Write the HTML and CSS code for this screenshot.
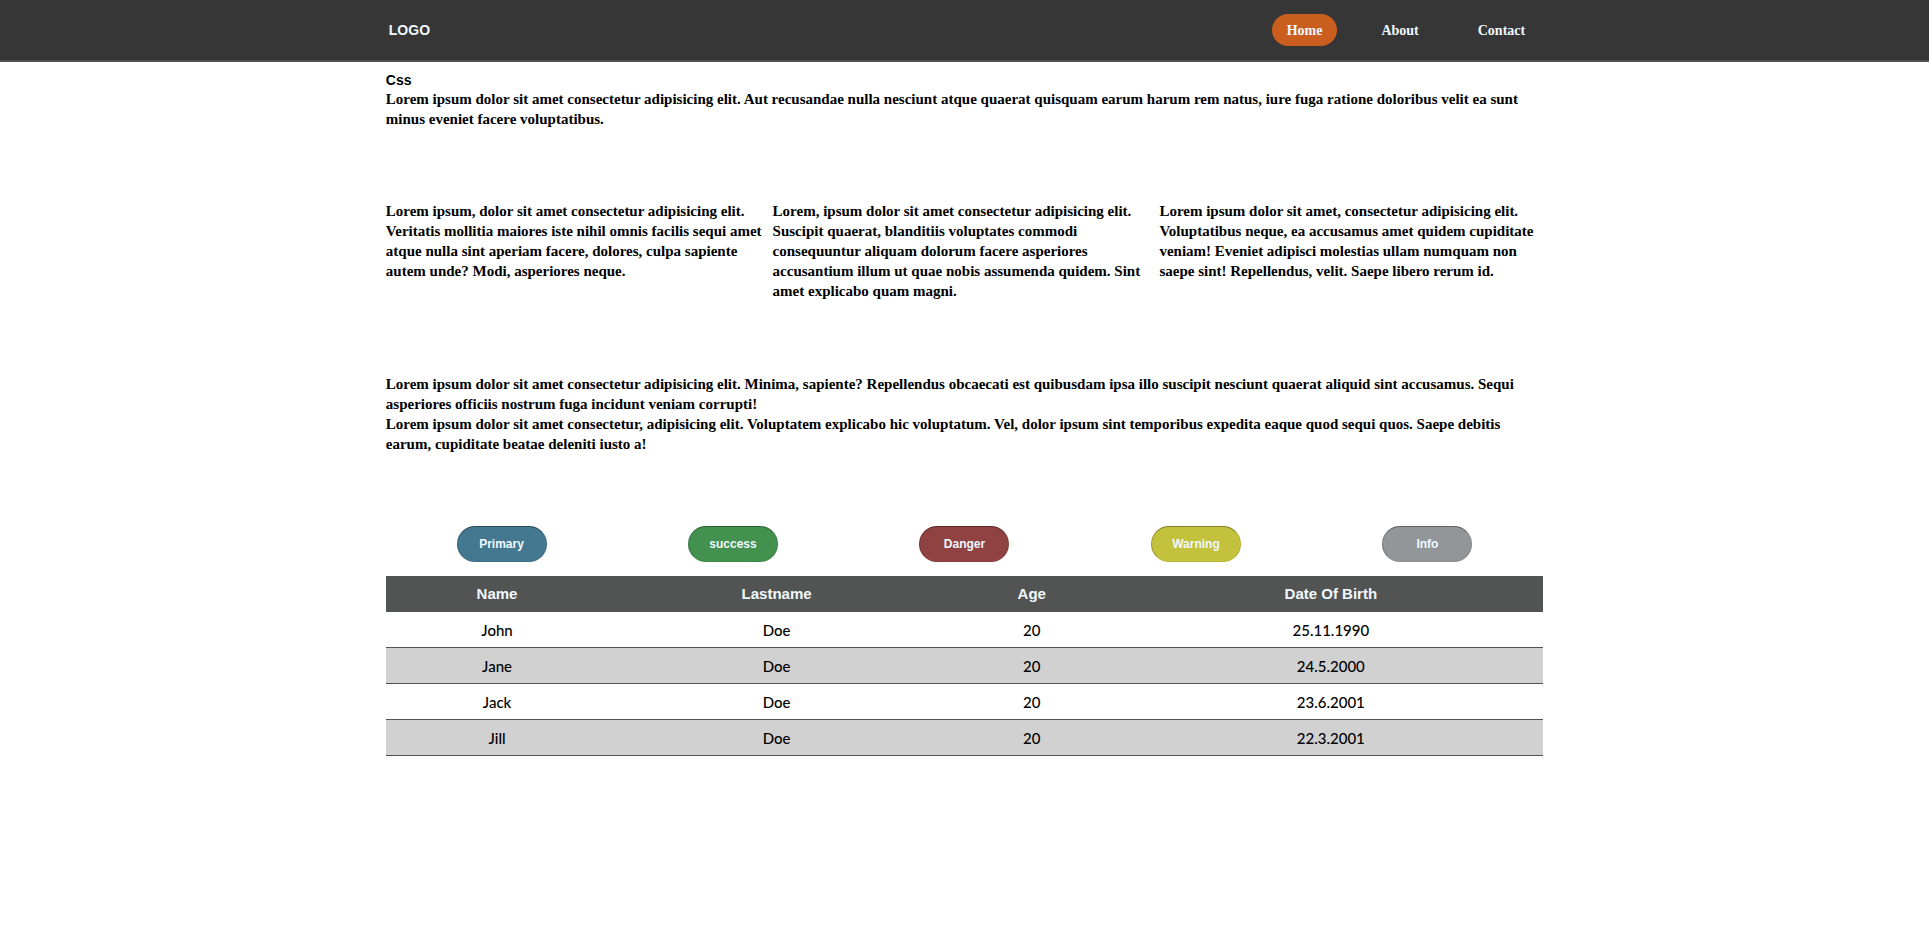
FILE: index.html
```html
<!DOCTYPE html>
<html lang="en">
<head>
<meta charset="utf-8">
<title>Css</title>
<link rel="stylesheet" href="styles.css">
</head>
<body>
<header class="header">
  <div class="container header-inner">
    <span class="logo">LOGO</span>
    <nav class="nav">
      <a class="nav-link active" href="#">Home</a>
      <a class="nav-link" href="#">About</a>
      <a class="nav-link" href="#">Contact</a>
    </nav>
  </div>
</header>
<main class="container main">
  <section>
    <h1 class="title">Css</h1>
    <p>Lorem ipsum dolor sit amet consectetur adipisicing elit. Aut recusandae nulla nesciunt atque quaerat quisquam earum harum rem natus, iure fuga ratione doloribus velit ea sunt minus eveniet facere voluptatibus.</p>
  </section>
  <section class="columns">
    <p>Lorem ipsum, dolor sit amet consectetur adipisicing elit. Veritatis mollitia maiores iste nihil omnis facilis sequi amet atque nulla sint aperiam facere, dolores, culpa sapiente autem unde? Modi, asperiores neque.</p>
    <p>Lorem, ipsum dolor sit amet consectetur adipisicing elit. Suscipit quaerat, blanditiis voluptates commodi consequuntur aliquam dolorum facere asperiores accusantium illum ut quae nobis assumenda quidem. Sint amet explicabo quam magni.</p>
    <p>Lorem ipsum dolor sit amet, consectetur adipisicing elit. Voluptatibus neque, ea accusamus amet quidem cupiditate veniam! Eveniet adipisci molestias ullam numquam non saepe sint! Repellendus, velit. Saepe libero rerum id.</p>
  </section>
  <section>
    <p>Lorem ipsum dolor sit amet consectetur adipisicing elit. Minima, sapiente? Repellendus obcaecati est quibusdam ipsa illo suscipit nesciunt quaerat aliquid sint accusamus. Sequi asperiores officiis nostrum fuga incidunt veniam corrupti!</p>
    <p>Lorem ipsum dolor sit amet consectetur, adipisicing elit. Voluptatem explicabo hic voluptatum. Vel, dolor ipsum sint temporibus expedita eaque quod sequi quos. Saepe debitis earum, cupiditate beatae deleniti iusto a!</p>
  </section>
  <section>
    <div class="buttons">
      <button class="btn primary" type="button">Primary</button>
      <button class="btn success" type="button">success</button>
      <button class="btn danger" type="button">Danger</button>
      <button class="btn warning" type="button">Warning</button>
      <button class="btn info" type="button">Info</button>
    </div>
    <table class="table">
      <thead>
        <tr><th>Name</th><th>Lastname</th><th>Age</th><th>Date Of Birth</th></tr>
      </thead>
      <tbody>
        <tr><td>John</td><td>Doe</td><td>20</td><td>25.11.1990</td></tr>
        <tr><td>Jane</td><td>Doe</td><td>20</td><td>24.5.2000</td></tr>
        <tr><td>Jack</td><td>Doe</td><td>20</td><td>23.6.2001</td></tr>
        <tr><td>Jill</td><td>Doe</td><td>20</td><td>22.3.2001</td></tr>
      </tbody>
    </table>
  </section>
</main>
</body>
</html>
```
FILE: styles.css
```css
* {
  box-sizing: border-box;
  margin: 0;
  padding: 0;
}

body {
  background: #fff;
  color: #000;
  font: bold 15px/20px "Liberation Serif", "Times New Roman", serif;
}

.container {
  width: 60%;
  margin: 0 auto;
}

.header {
  background: #363636;
  border-bottom: 2px solid #525453;
}

.header-inner {
  display: flex;
  justify-content: space-between;
  align-items: center;
  padding: 14px 3px;
}

.logo,
.title {
  font: bold 14px/17px "Liberation Sans", Arial, sans-serif;
}

.logo {
  color: aliceblue;
}

.nav {
  display: flex;
  gap: 29px;
}

.nav-link {
  padding: 7px 15px 5px;
  border-radius: 16px;
  color: aliceblue;
  font-size: 14px;
  text-decoration: none;
}

.nav-link.active {
  background: #c95e1f;
}

.main {
  display: flex;
  flex-direction: column;
  gap: 72px;
  padding-top: 10px;
}

.columns {
  display: grid;
  grid-template-columns: repeat(3, 1fr);
  gap: 3px;
  padding-bottom: 1px;
}

.buttons {
  display: flex;
  justify-content: space-around;
  margin-bottom: 14px;
}

.btn {
  width: 90px;
  height: 36px;
  border: 1px solid;
  border-color: rgba(0, 0, 0, 0.35) rgba(0, 0, 0, 0.1) rgba(0, 0, 0, 0.05) rgba(0, 0, 0, 0.2);
  border-radius: 18px;
  color: aliceblue;
  font: bold 12px "Liberation Sans", Arial, sans-serif;
}

.primary {
  background: #437890;
}

.success {
  background: #42914e;
}

.danger {
  background: #904242;
}

.warning {
  background: #c4c23c;
}

.info {
  background: #929699;
}

.table {
  width: 100%;
  border-spacing: 0;
  text-align: center;
}

.table th,
.table td {
  height: 36px;
  padding: 0 8px;
  border-bottom: 1px solid #525453;
}

.table th {
  background: #525453;
  color: aliceblue;
  font: bold 15px "Liberation Sans", Arial, sans-serif;
}

.table td {
  font: 500 15px Lato, sans-serif;
}

.table tbody tr:nth-child(even) {
  background: #d1d1d1;
}
```
